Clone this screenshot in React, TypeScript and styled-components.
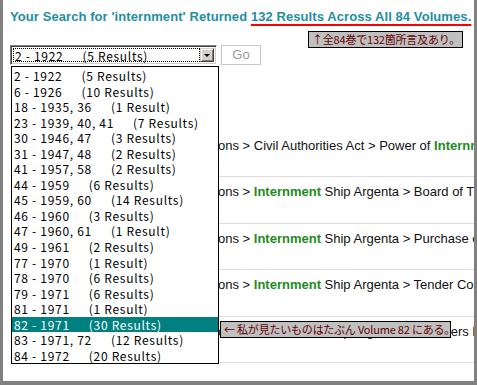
import React from "react";
import styled, { createGlobalStyle } from "styled-components";

const GlobalStyle = createGlobalStyle`
  html, body { margin: 0; padding: 0; background: #fff; }
  body { font-family: "Liberation Sans", Arial, sans-serif; }
`;

const UI_FONT = `"Noto Sans CJK JP", "Liberation Sans", sans-serif`;

const Frame = styled.div`
  position: relative;
  width: 477px;
  height: 385px;
  box-sizing: border-box;
  border: 3px solid #808080;
  border-top: 0;
  border-bottom-width: 4px;
  background: #fff;
  overflow: hidden;
  padding: 9px 0 0 7px;
`;

const Heading = styled.div`
  font-size: 13px;
  line-height: 15px;
  font-weight: bold;
  letter-spacing: 0.08px;
  color: #1e8fa0;
  white-space: nowrap;
`;

const Marked = styled.span`
  text-decoration: underline;
  text-decoration-color: #ff0000;
  text-decoration-thickness: 2px;
  text-underline-offset: 3px;
`;

const FormRow = styled.div`
  display: flex;
  align-items: flex-start;
  gap: 4px;
  margin-top: 21px;
`;

const SelectWrap = styled.div`
  position: relative;
  width: 207px;
  height: 20px;
`;

const SelectBox = styled.div`
  box-sizing: border-box;
  width: 207px;
  height: 20px;
  display: flex;
  align-items: stretch;
  border-top: 1px solid #808080;
  border-left: 1px solid #808080;
  border-right: 1px solid #fff;
  border-bottom: 1px solid #fff;
  box-shadow: inset 1px 1px 0 #404040, inset -1px -1px 0 #d4d0c8;
  padding: 2px;
  background: #fff;
`;

const SelectValue = styled.div`
  flex: 1;
  box-sizing: border-box;
  border: 1px dotted #000;
  font-family: ${UI_FONT};
  font-size: 12px;
  line-height: 14px;
  letter-spacing: 0.7px;
  padding-left: 1px;
  white-space: nowrap;
  color: #000;
`;

const ArrowButton = styled.div`
  width: 14px;
  box-sizing: border-box;
  background: #d4d0c8;
  border-top: 1px solid #d4d0c8;
  border-left: 1px solid #d4d0c8;
  border-right: 1px solid #404040;
  border-bottom: 1px solid #404040;
  box-shadow: inset 1px 1px 0 #fff, inset -1px -1px 0 #808080;
  display: flex;
  align-items: center;
  justify-content: center;
  &::after {
    content: "";
    border-left: 3px solid transparent;
    border-right: 3px solid transparent;
    border-top: 3px solid #000;
    margin-top: 1px;
  }
`;

const GoButton = styled.div`
  box-sizing: border-box;
  width: 40px;
  height: 20px;
  border: 1px solid #c8c8c8;
  background: #fff;
  color: #9a9a9a;
  font-size: 13px;
  line-height: 18px;
  text-align: center;
`;

const List = styled.div`
  position: absolute;
  top: 21px;
  left: 1px;
  width: 208px;
  box-sizing: border-box;
  border: 1px solid #000;
  background: #fff;
  padding: 1px 0 0;
  z-index: 2;
`;

const Item = styled.div<{ $selected?: boolean }>`
  height: 15.55px;
  line-height: 15.55px;
  padding-left: 2px;
  font-family: ${UI_FONT};
  font-size: 12px;
  letter-spacing: 0.7px;
  white-space: nowrap;
  background: ${(p) => (p.$selected ? "#008080" : "transparent")};
  color: ${(p) => (p.$selected ? "#fff" : "#000")};
`;

const Count = styled.span`
  margin-left: 19px;
`;

const Results = styled.div`
  margin-top: 66px;
  margin-left: 1px;
`;

const Row = styled.div`
  padding: 7px 0 23.4px;
  line-height: 15px;
  font-size: 13px;
  color: #111;
  white-space: nowrap;
  border-bottom: 1px solid #dedede;
`;

const Hit = styled.span`
  color: #1f8a1f;
  font-weight: bold;
`;

const Note = styled.div<{ $left: number; $top: number; $width: number }>`
  position: absolute;
  left: ${(p) => p.$left}px;
  top: ${(p) => p.$top}px;
  width: ${(p) => p.$width}px;
  height: 17px;
  box-sizing: border-box;
  border: 1px solid #000;
  background: #c0c0c0;
  color: #600000;
  font-family: ${UI_FONT};
  font-size: 11px;
  letter-spacing: -0.2px;
  line-height: 15px;
  padding-left: 3px;
  white-space: nowrap;
  overflow: hidden;
  z-index: 3;
`;

const volumes: [string, string][] = [
  ["2 - 1922", "(5 Results)"],
  ["6 - 1926", "(10 Results)"],
  ["18 - 1935, 36", "(1 Result)"],
  ["23 - 1939, 40, 41", "(7 Results)"],
  ["30 - 1946, 47", "(3 Results)"],
  ["31 - 1947, 48", "(2 Results)"],
  ["41 - 1957, 58", "(2 Results)"],
  ["44 - 1959", "(6 Results)"],
  ["45 - 1959, 60", "(14 Results)"],
  ["46 - 1960", "(3 Results)"],
  ["47 - 1960, 61", "(1 Result)"],
  ["49 - 1961", "(2 Results)"],
  ["77 - 1970", "(1 Result)"],
  ["78 - 1970", "(6 Results)"],
  ["79 - 1971", "(6 Results)"],
  ["81 - 1971", "(1 Result)"],
  ["82 - 1971", "(30 Results)"],
  ["83 - 1971, 72", "(12 Results)"],
  ["84 - 1972", "(20 Results)"],
];

const PREFIX = "Statutory Rules & Orders > Regulations > ";

export default function App() {
  return (
    <>
      <GlobalStyle />
      <Frame>
        <Heading>
          Your Search for 'internment' Returned{" "}
          <Marked>132 Results Across All 84 Volumes.</Marked>
        </Heading>
        <FormRow>
          <SelectWrap>
            <SelectBox>
              <SelectValue>
                {volumes[0][0]}
                <Count>{volumes[0][1]}</Count>
              </SelectValue>
              <ArrowButton />
            </SelectBox>
            <List>
              {volumes.map(([vol, count], i) => (
                <Item key={vol} $selected={i === 16}>
                  {vol}
                  <Count>{count}</Count>
                </Item>
              ))}
            </List>
          </SelectWrap>
          <GoButton>Go</GoButton>
        </FormRow>
        <Results>
          <Row>
            {PREFIX}Civil Authorities Act &gt; Power of <Hit>Internment</Hit>
          </Row>
          <Row>
            {PREFIX}
            <Hit>Internment</Hit> Ship Argenta &gt; Board of Trade
          </Row>
          <Row>
            {PREFIX}
            <Hit>Internment</Hit> Ship Argenta &gt; Purchase of Ship
          </Row>
          <Row>
            {PREFIX}
            <Hit>Internment</Hit> Ship Argenta &gt; Tender Conditions
          </Row>
          <Row>
            {PREFIX}
            <Hit>Internment</Hit> Ship Argenta &gt; Prisoners Names
          </Row>
        </Results>
        <Note $left={305} $top={31} $width={155}>
          ↑全84巻で132箇所言及あり。
        </Note>
        <Note $left={217} $top={321} $width={231}>
          ← 私が見たいものはたぶん Volume 82 にある。
        </Note>
      </Frame>
    </>
  );
}
